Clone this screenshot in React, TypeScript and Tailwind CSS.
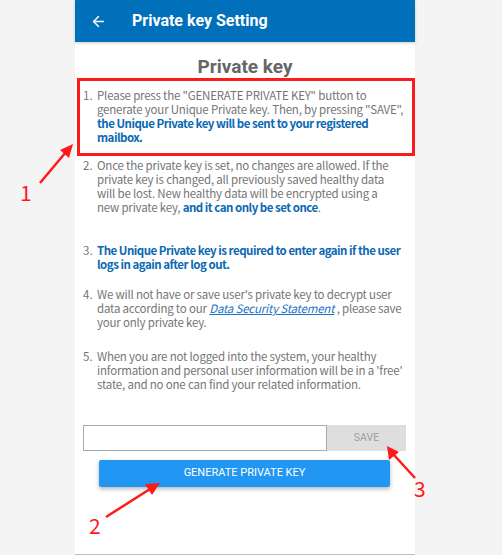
import { ArrowLeft } from "lucide-react";

const body = { fontFamily: '"Noto Sans CJK SC", "Noto Sans", sans-serif' };
const roboto = { fontFamily: "Roboto, Arial, sans-serif" };

function Item({ n, children, className = "" }: { n: number; children: React.ReactNode; className?: string }) {
    return (
        <div className={`flex text-[11.5px] leading-[14px] text-[#757575] ${className}`}>
            <span className="w-[14px] shrink-0">{n}.</span>
            <p className="min-w-0 whitespace-nowrap tracking-[-0.2px]">{children}</p>
        </div>
    );
}

const Blue = ({ children }: { children: React.ReactNode }) => (
    <span className="font-bold tracking-[-0.5px] text-[#0a68b4]">{children}</span>
);

function Annotations() {
    return (
        <div className="pointer-events-none absolute inset-0">
            <svg className="absolute left-0 top-0" width="502" height="555">
                {/* arrow 1 */}
                <line x1="40" y1="183" x2="66" y2="152" stroke="#ff1a1a" strokeWidth="2.5" />
                <polygon points="73,144 60,150 69,158" fill="#ff1a1a" />
                {/* arrow 2 */}
                <line x1="106" y1="517" x2="150" y2="489" stroke="#ff1a1a" strokeWidth="2.5" />
                <polygon points="160,483 145,484 152,495" fill="#ff1a1a" />
                {/* arrow 3 */}
                <line x1="415" y1="478" x2="394" y2="455" stroke="#ff1a1a" strokeWidth="2.5" />
                <polygon points="387,446 389,460 399,452" fill="#ff1a1a" />
            </svg>
            <span className="absolute left-[20px] top-[180px] text-[21px] leading-[24px] text-[#ff1a1a]" style={body}>1</span>
            <span className="absolute left-[89px] top-[513px] text-[21px] leading-[24px] text-[#ff1a1a]" style={body}>2</span>
            <span className="absolute left-[414px] top-[476px] text-[21px] leading-[24px] text-[#ff1a1a]" style={body}>3</span>
        </div>
    );
}

export default function App() {
    return (
        <div className="relative h-[555px] w-[502px] overflow-hidden bg-[#f4f4f4] pl-[75px]">
            <div className="flex h-[555px] w-[340px] flex-col border-b border-[#bdbdbd] bg-white">
                <header
                    className="flex h-[42px] shrink-0 items-center bg-[#0070bb] pl-[15px] text-white shadow-[0_1px_3px_rgba(0,0,0,0.2)]"
                    style={roboto}
                >
                    <ArrowLeft size={17} strokeWidth={2} />
                    <h1 className="ml-[25px] text-[16px] font-bold">Private key Setting</h1>
                </header>

                <div style={body}>
                    <h2 className="mt-[14px] text-center text-[19px] font-bold leading-[22px] text-[#666]" style={roboto}>
                        Private key
                    </h2>

                    <div className="ml-[2px] border-[3px] border-[#ff1a1a] pb-[9px] pl-[3px] pr-[2px] pt-[7px]">
                        <Item n={1}>
                            Please press the "GENERATE PRIVATE KEY" button to
                            <br />
                            generate your Unique Private key. Then, by pressing "SAVE",
                            <br />
                            <Blue>
                                the Unique Private key will be sent to your registered
                                <br />
                                mailbox.
                            </Blue>
                        </Item>
                    </div>

                    <div className="pl-[8px] pr-[4px]">
                        <Item n={2} className="mt-[2px]">
                            Once the private key is set, no changes are allowed. If the
                            <br />
                            private key is changed, all previously saved healthy data
                            <br />
                            will be lost. New healthy data will be encrypted using a
                            <br />
                            new private key, <Blue>and it can only be set once</Blue>.
                        </Item>
                        <Item n={3} className="mt-[29px]">
                            <Blue>
                                The Unique Private key is required to enter again if the user
                                <br />
                                logs in again after log out.
                            </Blue>
                        </Item>
                        <Item n={4} className="mt-[16px]">
                            We will not have or save user's private key to decrypt user
                            <br />
                            data according to our{" "}
                            <span className="italic text-[#1a73c8] underline">Data Security Statement</span> , please save
                            <br />
                            your only private key.
                        </Item>
                        <Item n={5} className="mt-[20px]">
                            When you are not logged into the system, your healthy
                            <br />
                            information and personal user information will be in a 'free'
                            <br />
                            state, and no one can find your related information.
                        </Item>
                    </div>

                    <div className="ml-[8px] mt-[34px] flex h-[26px] w-[323px]" style={roboto}>
                        <input className="h-full w-[244px] border border-[#aaa] bg-white outline-none" />
                        <button className="h-full flex-1 bg-[#dedede] text-[10.5px] text-[#9e9e9e]">SAVE</button>
                    </div>

                    <button
                        className="ml-[24px] mt-[9px] h-[27px] w-[291px] rounded-[2px] bg-[#2196f3] text-[11px] text-white shadow-[0_2px_4px_rgba(0,0,0,0.3)]"
                        style={roboto}
                    >
                        GENERATE PRIVATE KEY
                    </button>
                </div>
            </div>
            <Annotations />
        </div>
    );
}
